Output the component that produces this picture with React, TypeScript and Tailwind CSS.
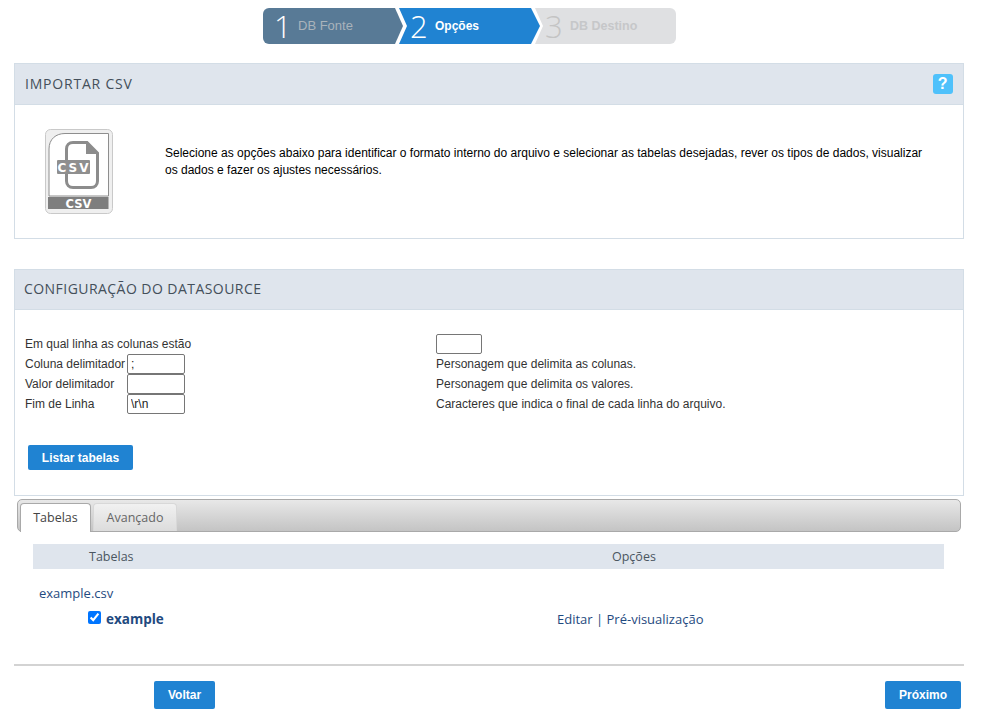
const arial = "font-['Liberation_Sans',Arial,sans-serif]";

// CSV file badge, drawn in greys
function CsvIcon() {
  return (
    <svg width="68" height="85" viewBox="0 0 68 85" className="block">
      <rect x="0.5" y="0.5" width="67" height="84" rx="5" fill="#efefef" stroke="#c9c9c9" />
      <path d="M4 67V20C4 10 11 4.5 20 4.5H63.5V67Z" fill="#fff" stroke="#8e8e8e" />
      <path d="M21.5 31V20C21.5 16 24 13.5 28 13.5H42L52.5 24V52C52.5 56 50 58.5 46 58.5H28C24 58.5 21.5 56 21.5 52V45" fill="none" stroke="#8c8c8c" strokeWidth="3" />
      <path d="M41 13V25H53Z" fill="#8c8c8c" />
      <rect x="12" y="31" width="33" height="14" rx="1" fill="#8f8f8f" />
      <text x="29" y="42.5" textAnchor="middle" fontFamily="'DejaVu Sans',sans-serif" fontSize="12" fontWeight="700" letterSpacing="2" fill="#fff">CSV</text>
      <rect x="3" y="68" width="60.5" height="12" fill="#7e7e7e" />
      <text x="33.5" y="78.5" textAnchor="middle" fontFamily="'DejaVu Sans',sans-serif" fontSize="11.5" fontWeight="700" fill="#fff">CSV</text>
    </svg>
  );
}

function Stepper() {
  return (
    <div className={`flex pt-2 pl-[263px] ${arial}`}>
      <div className="flex h-9 w-[413px]">
        <div className="flex h-9 w-[140px] items-center rounded-l-md bg-[#587a96] pl-[11px] [clip-path:polygon(0_0,132px_0,140px_18px,132px_36px,0_36px)]">
          <span className="w-[24px] font-['Open_Sans',sans-serif] text-[31px] leading-none font-light text-white">1</span>
          <span className="text-[13px] text-[#a9b3bb]">DB Fonte</span>
        </div>
        <div className="-ml-1 flex h-9 w-[141px] items-center bg-[#2083d2] pl-[11px] [clip-path:polygon(0_0,132px_0,141px_18px,132px_36px,0_36px,8px_18px)]">
          <span className="w-[25px] font-['Open_Sans',sans-serif] text-[31px] leading-none font-light text-white">2</span>
          <span className="text-xs font-bold text-white">Opções</span>
        </div>
        <div className="-ml-[5px] flex h-9 w-[141px] items-center rounded-r-md bg-[#dfe0e2] pl-[10px] [clip-path:polygon(0_0,100%_0,100%_100%,0_100%,8px_18px)]">
          <span className="w-[25px] font-['Open_Sans',sans-serif] text-[31px] leading-none font-light text-[#c4c4c4]">3</span>
          <span className="text-[12.5px] font-bold text-[#c6c7c9]">DB Destino</span>
        </div>
      </div>
    </div>
  );
}

function PanelHeader({ title, help, className }: { title: string; help?: boolean; className?: string }) {
  return (
    <div className={`flex items-center justify-between border-b border-[#d3dde6] bg-[#dfe5ed] pr-[10px] ${className ?? ''}`}>
      <span className="font-['Open_Sans',sans-serif] text-sm text-[#444f5a]">{title}</span>
      {help && (
        <span className={`flex h-5 w-5 items-center justify-center rounded-[3px] bg-[#4fc1fb] text-[16px] font-bold text-white ${arial}`}>?</span>
      )}
    </div>
  );
}

function Field({ value, className }: { value?: string; className?: string }) {
  return (
    <input
      defaultValue={value}
      className={`h-5 rounded-[2px] border border-[#767676] bg-white px-[3px] text-xs text-[#222] outline-none ${className ?? 'w-[58px]'}`}
    />
  );
}

function FormRow({ label, input, hint }: { label: string; input?: string | boolean; hint?: string }) {
  return (
    <>
      <div className="flex h-5 items-center text-xs text-[#333]">
        <span className="w-[102px] whitespace-nowrap">{label}</span>
        {input !== undefined && <Field value={typeof input === 'string' ? input : undefined} />}
      </div>
      <div className="flex h-5 items-center text-xs text-[#333]">{hint}</div>
    </>
  );
}

function BlueButton({ children, className }: { children: string; className?: string }) {
  return (
    <button className={`rounded-[2px] bg-[#2083d2] text-xs font-bold text-white ${className ?? ''}`}>
      {children}
    </button>
  );
}

export default function App() {
  return (
    <div className={`h-[724px] w-[978px] overflow-hidden bg-white ${arial}`}>
      <Stepper />

      <div className="mx-[14px] mt-[19px] h-[176px] border border-[#d3dde6]">
        <PanelHeader title="IMPORTAR CSV" help className="h-[41px] pl-[10px] tracking-[0.8px]" />
        <div className="flex pt-[24px] pl-[30px]">
          <CsvIcon />
          <p className="mt-[16px] ml-[52px] w-[770px] text-xs leading-[17px] text-black">
            Selecione as opções abaixo para identificar o formato interno do arquivo e selecionar as tabelas desejadas, rever os tipos de dados, visualizar os dados e fazer os ajustes necessários.
          </p>
        </div>
      </div>

      <div className="mx-[14px] mt-[30px] h-[227px] border border-[#d3dde6]">
        <PanelHeader title="CONFIGURAÇÃO DO DATASOURCE" className="h-[40px] pb-[2px] pl-[9px] tracking-[0.45px]" />
        <div className="mt-[24px] grid grid-cols-[411px_1fr] pl-[10px]">
          <div className="flex h-5 items-center text-xs text-[#333]">Em qual linha as colunas estão</div>
          <div className="flex h-5 items-center"><Field className="w-[46px]" /></div>
          <FormRow label="Coluna delimitador" input=";" hint="Personagem que delimita as colunas." />
          <FormRow label="Valor delimitador" input hint="Personagem que delimita os valores." />
          <FormRow label="Fim de Linha" input="\r\n" hint="Caracteres que indica o final de cada linha do arquivo." />
        </div>
        <BlueButton className="mt-[31px] ml-[13px] h-[25px] w-[105px]">Listar tabelas</BlueButton>
      </div>

      <div className="mx-[17px] mt-[3px] flex h-[33px] items-end gap-[2px] rounded-[5px] border border-[#a9a9a9] bg-gradient-to-b from-[#e8e8e8] to-[#c4c4c4] pl-[2px] font-['Open_Sans',sans-serif] text-[12.5px]">
        <div className="-mb-px flex h-[29px] w-[71px] items-center justify-center rounded-t-[4px] border border-b-0 border-[#a9a9a9] bg-white text-[#444]">Tabelas</div>
        <div className="flex h-[28px] w-[84px] items-center justify-center rounded-t-[4px] border border-b-0 border-[#d8d8d8] bg-gradient-to-b from-[#f1f1f1] to-[#dcdcdc] pt-px text-[#666]">Avançado</div>
      </div>

      <div className="mt-[12px] mr-[34px] ml-[33px] font-['Open_Sans',sans-serif] text-[13px]">
        <div className="flex h-[25px] items-center bg-[#dfe5ed] pt-[2px] text-[12.5px] text-[#4b5661]">
          <span className="ml-[56px] w-[523px]">Tabelas</span>
          <span>Opções</span>
        </div>
        <div className="mt-[16px] pl-[6px] leading-4 text-[#1f4a80]">example.csv</div>
        <div className="mt-[8px] flex h-5 items-center text-[#1f4a80]">
          <input type="checkbox" defaultChecked className="-mt-[3px] ml-[55px] h-[13px] w-[13px] accent-[#0075ff]" />
          <span className="ml-[5px] w-[451px] text-[13.5px] font-bold">example</span>
          <span className="mt-[2px]">Editar | Pré-visualização</span>
        </div>
      </div>

      <div className="mx-[14px] mt-[35px] h-[2px] bg-[#d3d3d3]" />

      <div className="mt-[15px] flex justify-between pr-[17px] pl-[154px]">
        <BlueButton className="h-7 w-[61px]">Voltar</BlueButton>
        <BlueButton className="h-7 w-[76px]">Próximo</BlueButton>
      </div>
    </div>
  );
}
